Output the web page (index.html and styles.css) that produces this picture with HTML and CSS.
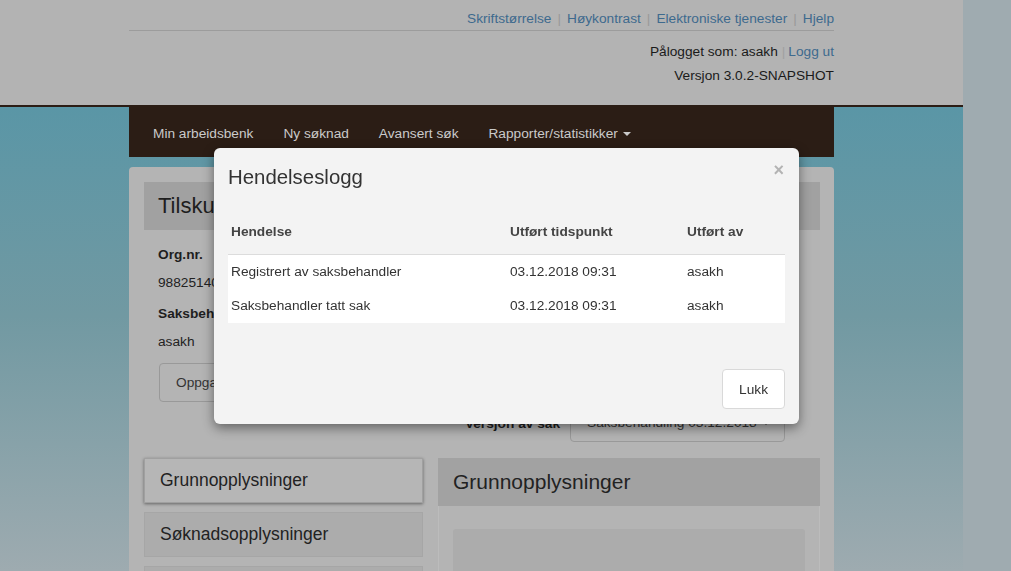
FILE: index.html
```html
<!DOCTYPE html>
<html lang="no">
<head>
<meta charset="utf-8">
<title>Hendelseslogg</title>
<link rel="stylesheet" href="styles.css">
</head>
<body>
<div class="page">
  <header class="site-header">
    <div class="container">
      <div class="top-links">
        <a href="#">Skriftstørrelse</a><span class="sep">|</span><a href="#">Høykontrast</a><span class="sep">|</span><a href="#">Elektroniske tjenester</a><span class="sep">|</span><a href="#">Hjelp</a>
      </div>
      <div class="user-info">
        <div>Pålogget som: asakh<span class="sep small">|</span><a href="#">Logg ut</a></div>
        <div>Versjon 3.0.2-SNAPSHOT</div>
      </div>
    </div>
  </header>
  <main class="stage">
    <nav class="navbar">
      <a href="#">Min arbeidsbenk</a>
      <a href="#">Ny søknad</a>
      <a href="#">Avansert søk</a>
      <a href="#">Rapporter/statistikker <span class="caret"></span></a>
    </nav>
    <section class="panel">
      <div class="case-title">Tilskuddssak</div>
      <div class="case-info">
        <div class="label">Org.nr.</div>
        <div class="value">988251404</div>
        <div class="label">Saksbehandler</div>
        <div class="value">asakh</div>
        <div class="btn-row"><button class="btn-ghost">Oppgaver</button></div>
        <div class="version-row">
          <span class="version-label">Versjon av sak</span>
          <span class="select">Saksbehandling 03.12.2018 <span class="caret dark"></span></span>
        </div>
      </div>
      <div class="columns">
        <ul class="side-menu">
          <li class="active">Grunnopplysninger</li>
          <li>Søknadsopplysninger</li>
          <li>Vedlegg</li>
        </ul>
        <div class="content">
          <div class="content-head">Grunnopplysninger</div>
          <div class="content-body"><div class="inner-box"></div></div>
        </div>
      </div>
    </section>
  </main>
</div>

<div class="modal">
  <div class="modal-header">
    <h4>Hendelseslogg</h4>
    <span class="close">×</span>
  </div>
  <div class="modal-body">
    <table>
      <colgroup><col class="c1"><col class="c2"><col class="c3"></colgroup>
      <thead>
        <tr><th>Hendelse</th><th>Utført tidspunkt</th><th>Utført av</th></tr>
      </thead>
      <tbody>
        <tr><td>Registrert av saksbehandler</td><td>03.12.2018 09:31</td><td>asakh</td></tr>
        <tr><td>Saksbehandler tatt sak</td><td>03.12.2018 09:31</td><td>asakh</td></tr>
      </tbody>
    </table>
  </div>
  <div class="modal-footer">
    <button class="btn">Lukk</button>
  </div>
</div>
</body>
</html>
```

FILE: styles.css
```css
html { background: #9fabb0; }
body {
  margin: 0;
  font-family: "Liberation Sans", Arial, sans-serif;
  font-size: 13.7px;
  color: #1a1a1a;
  height: 571px;
  overflow: hidden;
}
a { text-decoration: none; color: #3e6a8e; }

.page { width: 963px; height: 571px; display: flex; flex-direction: column; }

.site-header {
  background: #b3b3b3;
  height: 105px;
  border-bottom: 2px solid #2b1d15;
  flex: none;
}
.container { width: 705px; margin-left: 129px; }
.top-links {
  padding: 11px 0 3px;
  line-height: 16px;
  text-align: right;
  border-bottom: 1px solid #9c9c9c;
}
.sep { color: #999; margin: 0 6px; }
.sep.small { margin: 0 3px 0 4px; color: #a0a0a0; }
.user-info {
  padding-top: 9px;
  line-height: 24px;
  text-align: right;
  color: #1a1a1a;
}

.stage {
  flex: 1;
  background: linear-gradient(#5a96a6 0%, #7199a2 45%, #9eabb0 100%);
  padding-left: 129px;
  min-height: 0;
}
.navbar {
  width: 705px;
  height: 50px;
  background: #2b1d15;
  display: flex;
  align-items: center;
  padding: 3px 0 0 9px;
  box-sizing: border-box;
}
.navbar a {
  color: #cacaca;
  padding: 0 15px;
  line-height: 20px;
}
.caret {
  display: inline-block;
  width: 0; height: 0;
  border-left: 4px solid transparent;
  border-right: 4px solid transparent;
  border-top: 4px solid #cacaca;
  vertical-align: middle;
  margin-left: 1px;
}
.caret.dark { border-top-color: #444; }

.panel {
  width: 705px;
  box-sizing: border-box;
  margin-top: 10px;
  background: #b4b4b4;
  border-radius: 4px 4px 0 0;
  padding: 15px 14px 0 15px;
  height: 420px;
}
.case-title {
  background: #a1a1a1;
  height: 48px;
  line-height: 48px;
  font-size: 22px;
  padding-left: 14px;
  color: #1e1e1e;
}
.case-info { padding: 15px 35px 0 14px; }
.label { font-weight: bold; line-height: 20px; margin-bottom: 8px; color: #1e1e1e; }
.value { line-height: 20px; margin-bottom: 11px; color: #222; }
.btn-row { margin-top: 1px; padding-left: 1px; }
.btn-ghost {
  font: inherit;
  color: #333;
  background: #b4b4b4;
  border: 1px solid #999;
  border-radius: 4px;
  height: 39px;
  padding: 0 16px;
  display: block;
}
.version-row {
  display: flex;
  justify-content: flex-end;
  align-items: center;
  gap: 10px;
  margin-top: 2px;
}
.version-label { font-weight: bold; color: #1e1e1e; }
.select {
  width: 215px;
  box-sizing: border-box;
  height: 38px;
  line-height: 36px;
  border: 1px solid #999;
  border-radius: 4px;
  padding-left: 16px;
  color: #333;
}

.columns { display: flex; gap: 15px; margin-top: 16px; }
.side-menu { list-style: none; margin: 0; padding: 0; width: 279px; flex: none; }
.side-menu li {
  height: 45px;
  box-sizing: border-box;
  line-height: 43px;
  padding-left: 15px;
  font-size: 17.5px;
  color: #222;
  background: #acacac;
  border: 1px solid #a6a6a6;
  margin-bottom: 9px;
}
.side-menu li.active {
  background: #b6b6b6;
  border-color: #a0a0a0;
  box-shadow: 0 1px 3px rgba(0,0,0,0.45);
}
.content { flex: 1; }
.content-head {
  background: #a2a2a2;
  height: 48px;
  line-height: 48px;
  padding-left: 15px;
  font-size: 21px;
  color: #222;
}
.content-body {
  border: 1px solid #bcbcbc;
  border-top: none;
  padding: 23px 14px 0;
  height: 100px;
}
.inner-box { background: #acacac; height: 100px; border-radius: 3px; }

.modal {
  position: fixed;
  top: 148px;
  left: 214px;
  width: 585px;
  background: #f3f3f3;
  border-radius: 6px;
  box-shadow: 0 4px 12px rgba(0,0,0,0.45);
  color: #333;
}
.modal-header { position: relative; padding: 18px 15px 0 14px; }
.modal-header h4 {
  margin: 0;
  font-size: 20.4px;
  font-weight: normal;
  line-height: 22px;
  color: #333;
}
.close {
  position: absolute;
  top: 12px;
  right: 15px;
  font-size: 18px;
  font-weight: bold;
  color: #b3b3b3;
  line-height: 20px;
}
.modal-body { padding: 23px 14px 0; }
table { width: 557px; border-collapse: collapse; table-layout: fixed; }
col.c1 { width: 279px; }
col.c2 { width: 177px; }
col.c3 { width: 101px; }
th {
  text-align: left;
  font-weight: bold;
  padding: 11px 3px 12px;
  line-height: 20px;
  border-bottom: 1px solid #dcdcdc;
  color: #444;
}
td {
  background: #fff;
  padding: 7px 3px;
  line-height: 20px;
  color: #333;
}
.modal-footer { padding: 46px 14px 15px; text-align: right; }
.btn {
  font: inherit;
  color: #333;
  background: #fff;
  border: 1px solid #d9d9d9;
  border-radius: 4px;
  height: 40px;
  padding: 0 16px;
}
```
